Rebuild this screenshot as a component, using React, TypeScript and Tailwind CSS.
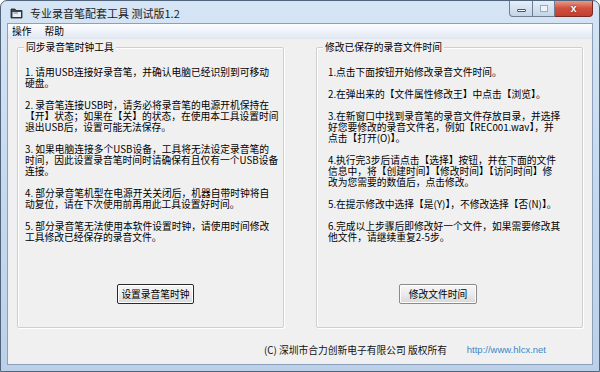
import React from "react";

const leftItems: string[][] = [
  ["1. 请用USB连接好录音笔，并确认电脑已经识别到可移动", "硬盘。"],
  ["2. 录音笔连接USB时，请务必将录音笔的电源开机保持在", "【开】状态；如果在【关】的状态，在使用本工具设置时间", "退出USB后，设置可能无法保存。"],
  ["3. 如果电脑连接多个USB设备，工具将无法设定录音笔的", "时间，因此设置录音笔时间时请确保有且仅有一个USB设备", "连接。"],
  ["4. 部分录音笔机型在电源开关关闭后，机器自带时钟将自", "动复位，请在下次使用前再用此工具设置好时间。"],
  ["5. 部分录音笔无法使用本软件设置时钟，请使用时间修改", "工具修改已经保存的录音文件。"],
];

const rightItems: string[][] = [
  ["1.点击下面按钮开始修改录音文件时间。"],
  ["2.在弹出来的【文件属性修改王】中点击【浏览】。"],
  ["3.在新窗口中找到录音笔的录音文件存放目录，并选择", "好您要修改的录音文件名，例如【REC001.wav】，并", "点击【打开(O)】。"],
  ["4.执行完3步后请点击【选择】按钮，并在下面的文件", "信息中，将【创建时间】【修改时间】【访问时间】修", "改为您需要的数值后，点击修改。"],
  ["5.在提示修改中选择【是(Y)】，不修改选择【否(N)】。"],
  ["6.完成以上步骤后即修改好一个文件，如果需要修改其", "他文件，请继续重复2-5步。"],
];

function Paras({ items }: { items: string[][] }) {
  return (
    <div className="flex flex-col gap-[11px]">
      {items.map((lines, i) => (
        <p key={i} className="leading-[11px] whitespace-nowrap">
          {lines.map((l, j) => (
            <React.Fragment key={j}>
              {j > 0 && <br />}
              {l}
            </React.Fragment>
          ))}
        </p>
      ))}
    </div>
  );
}

export default function App() {
  return (
    <div className="w-[600px] h-[372px] flex flex-col rounded-t-[7px] border border-[#50647c] bg-gradient-to-b from-[#d6e5f5] via-[#c6d9ee] to-[#bcd1e9] overflow-hidden font-['Noto_Sans_CJK_SC','Liberation_Sans',sans-serif] text-[9.75px] text-black">
      {/* Title bar */}
      <div className="relative h-[22px] flex items-center pl-[9px] shrink-0">
        <svg width="13" height="12" viewBox="0 0 13 12" className="mt-[2px]">
          <path d="M1 2 L5 2 L6 3.5 L12 3.5 L12 11 L1 11 Z" fill="#3c4650" stroke="#1d242b" strokeWidth="0.8" />
          <path d="M2.5 5 L11 5 L11 10 L2.5 10 Z" fill="#e9eef2" />
          <path d="M3.5 6 L8 6" stroke="#5b6a78" strokeWidth="0.8" />
        </svg>
        <span className="ml-[7px] mt-[2px] text-[11px] leading-[12px] text-[#1a1a1a]">专业录音笔配套工具 测试版1.2</span>
        <div className="absolute top-[-1px] right-[6px] flex">
          <div className="w-[24px] h-[17px] rounded-bl-[4px] border border-[#6e7d90] border-t-0 bg-gradient-to-b from-[#e8f0f9] to-[#c4d4e8] flex items-center justify-center">
            <div className="w-[9px] h-[3px] bg-[#fdfdfd] border border-[#46566a] rounded-[1px] mt-[4px]" />
          </div>
          <div className="w-[22px] h-[17px] border-b border-r border-[#6e7d90] bg-gradient-to-b from-[#e8f0f9] to-[#c4d4e8] flex items-center justify-center">
            <div className="w-[8px] h-[7px] border border-[#9aa9ba] bg-[#eef3f9]" />
          </div>
          <div className="w-[38px] h-[17px] rounded-br-[4px] border-b border-r border-[#7a2a22] bg-gradient-to-b from-[#e8a493] via-[#d2503f] to-[#c1402f] flex items-center justify-center">
            <span className="text-white text-[11px] font-bold leading-[11px] font-['Liberation_Sans',sans-serif]" style={{ textShadow: "0 0 2px #5a1a12" }}>x</span>
          </div>
        </div>
      </div>

      {/* Client area */}
      <div className="flex-1 mx-[6px] mb-[6px] border border-[#8ba0ba] bg-[#f0f0f0] flex flex-col">
        {/* Menu bar */}
        <div className="h-[15px] shrink-0 flex items-center gap-[13px] pl-[4px] bg-gradient-to-b from-[#fbfcfe] via-[#f0f4fa] to-[#e2e9f3] border-b border-[#e0e6ee]">
          <span className="leading-[12px]">操作</span>
          <span className="leading-[12px]">帮助</span>
        </div>

        {/* Body */}
        <div className="flex gap-[32px] pl-[9px] pt-[8px]">
          {/* Left group */}
          <div className="relative w-[267px] h-[281px] border border-[#cfcfcf] rounded-[2px] shadow-[inset_1px_1px_0_#ffffff,1px_1px_0_#ffffff] flex flex-col pt-[19px] pl-[7px] pb-[23px]">
            <span className="absolute top-[-7px] left-[6px] px-[2px] bg-[#f0f0f0] leading-[12px]">同步录音笔时钟工具</span>
            <Paras items={leftItems} />
            <div className="mt-auto ml-[92px] w-[77px] h-[20px] border border-[#2a2a2a] rounded-[2px] bg-gradient-to-b from-[#f6f6f6] via-[#ebebeb] to-[#d8d8d8] flex items-center justify-center shadow-[inset_0_0_0_1px_#ffffff]">
              <span className="leading-[12px]">设置录音笔时钟</span>
            </div>
          </div>
          {/* Right group */}
          <div className="relative w-[267px] h-[281px] border border-[#cfcfcf] rounded-[2px] shadow-[inset_1px_1px_0_#ffffff,1px_1px_0_#ffffff] flex flex-col pt-[19px] pl-[11px] pb-[23px]">
            <span className="absolute top-[-7px] left-[6px] px-[2px] bg-[#f0f0f0] leading-[12px]">修改已保存的录音文件时间</span>
            <Paras items={rightItems} />
            <div className="mt-auto ml-[71px] w-[78px] h-[20px] border border-[#8a8a8a] rounded-[2px] bg-gradient-to-b from-[#f6f6f6] via-[#ebebeb] to-[#d8d8d8] flex items-center justify-center shadow-[inset_0_0_0_1px_#ffffff]">
              <span className="leading-[12px]">修改文件时间</span>
            </div>
          </div>
        </div>

        {/* Footer */}
        <div className="flex items-center mt-[16px] h-[12px] pl-[256px]">
          <span className="leading-[12px] text-[#111]">(C) 深圳市合力创新电子有限公司 版权所有</span>
          <span className="ml-[auto] mr-[46px] leading-[12px] text-[#3f85c6] font-['Liberation_Sans',sans-serif] text-[9.5px]">http://www.hlcx.net</span>
        </div>
      </div>
    </div>
  );
}
